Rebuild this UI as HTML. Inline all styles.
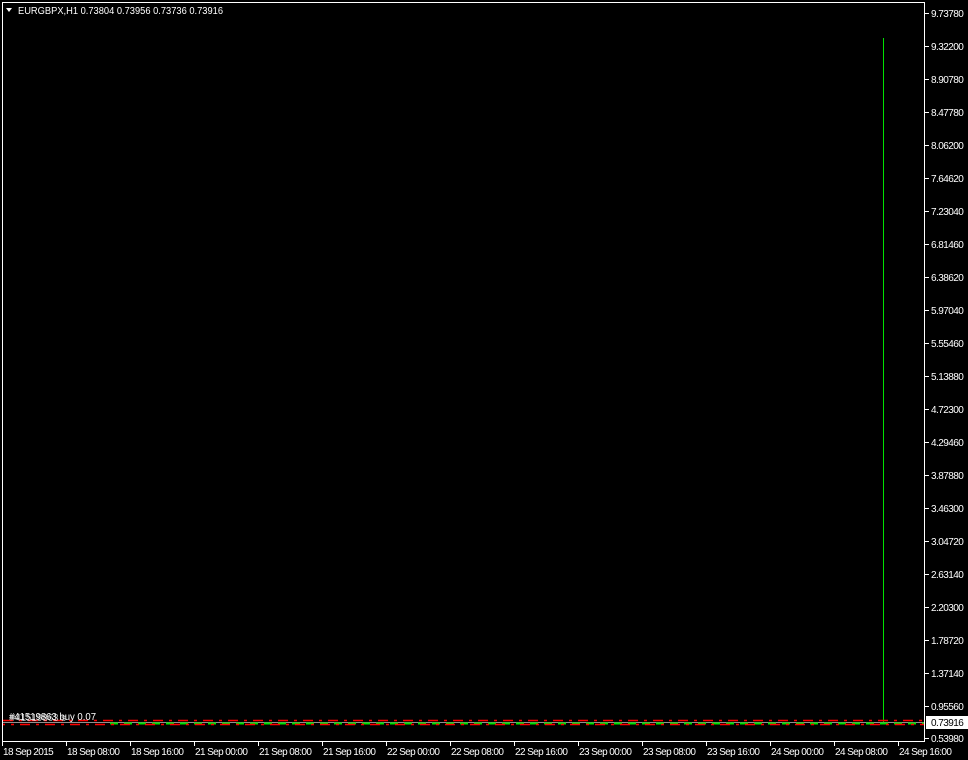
<!DOCTYPE html>
<html><head><meta charset="utf-8"><style>
html,body{margin:0;padding:0;background:#000;width:968px;height:760px;overflow:hidden}
svg text{font-family:"Liberation Sans",sans-serif;font-size:10px;fill:#fff}
.p text{letter-spacing:-0.55px}
.t text{letter-spacing:-0.6px}
</style></head><body>
<svg width="968" height="760" xmlns="http://www.w3.org/2000/svg">
<rect width="968" height="760" fill="#000"/>
<rect x="2.5" y="2.5" width="922" height="739" fill="none" stroke="#fff" stroke-width="1"/>
<polygon points="6,8 12,8 9,12" fill="#fff"/>
<text x="18" y="14" textLength="205" lengthAdjust="spacingAndGlyphs">EURGBPX,H1  0.73804 0.73956 0.73736 0.73916</text>
<line x1="883.5" y1="38" x2="883.5" y2="723" stroke="#00e000" stroke-width="1"/>
<line x1="3" y1="722.5" x2="924" y2="722.5" stroke="#909090" stroke-width="1"/>
<line x1="110" y1="723.5" x2="924" y2="723.5" stroke="#00e000" stroke-width="2" stroke-dasharray="8,6"/>
<line x1="3" y1="720.5" x2="924" y2="720.5" stroke="#ff0000" stroke-width="1.5" stroke-dasharray="10,6,3,6"/>
<line x1="3" y1="724.5" x2="924" y2="724.5" stroke="#ff0000" stroke-width="1.5" stroke-dasharray="10,6,3,6" stroke-dashoffset="8"/>
<text x="9" y="720" textLength="87" lengthAdjust="spacingAndGlyphs">#41519863 buy 0.07</text>
<text x="10" y="721" fill-opacity="0.7" textLength="56" lengthAdjust="spacingAndGlyphs">#41519863 s</text>
<g stroke="#fff">
<line x1="925" y1="13.5" x2="929" y2="13.5"/><line x1="925" y1="46.5" x2="929" y2="46.5"/><line x1="925" y1="79.5" x2="929" y2="79.5"/><line x1="925" y1="112.5" x2="929" y2="112.5"/><line x1="925" y1="145.5" x2="929" y2="145.5"/><line x1="925" y1="178.5" x2="929" y2="178.5"/><line x1="925" y1="211.5" x2="929" y2="211.5"/><line x1="925" y1="244.5" x2="929" y2="244.5"/><line x1="925" y1="277.5" x2="929" y2="277.5"/><line x1="925" y1="310.5" x2="929" y2="310.5"/><line x1="925" y1="343.5" x2="929" y2="343.5"/><line x1="925" y1="376.5" x2="929" y2="376.5"/><line x1="925" y1="409.5" x2="929" y2="409.5"/><line x1="925" y1="442.5" x2="929" y2="442.5"/><line x1="925" y1="475.5" x2="929" y2="475.5"/><line x1="925" y1="508.5" x2="929" y2="508.5"/><line x1="925" y1="541.5" x2="929" y2="541.5"/><line x1="925" y1="574.5" x2="929" y2="574.5"/><line x1="925" y1="607.5" x2="929" y2="607.5"/><line x1="925" y1="640.5" x2="929" y2="640.5"/><line x1="925" y1="673.5" x2="929" y2="673.5"/><line x1="925" y1="706.5" x2="929" y2="706.5"/><line x1="925" y1="738.5" x2="929" y2="738.5"/>
</g>
<g class="p">
<text x="931" y="17">9.73780</text><text x="931" y="50">9.32200</text><text x="931" y="83">8.90780</text><text x="931" y="116">8.47780</text><text x="931" y="149">8.06200</text><text x="931" y="182">7.64620</text><text x="931" y="215">7.23040</text><text x="931" y="248">6.81460</text><text x="931" y="281">6.38620</text><text x="931" y="314">5.97040</text><text x="931" y="347">5.55460</text><text x="931" y="380">5.13880</text><text x="931" y="413">4.72300</text><text x="931" y="446">4.29460</text><text x="931" y="479">3.87880</text><text x="931" y="512">3.46300</text><text x="931" y="545">3.04720</text><text x="931" y="578">2.63140</text><text x="931" y="611">2.20300</text><text x="931" y="644">1.78720</text><text x="931" y="677">1.37140</text><text x="931" y="710">0.95560</text><text x="931" y="742">0.53980</text>
<rect x="926" y="716" width="42" height="13" fill="#fff"/>
<text x="931" y="726" style="fill:#000">0.73916</text>
</g>
<g stroke="#fff">
<line x1="2.5" y1="741" x2="2.5" y2="746"/><line x1="66.5" y1="741" x2="66.5" y2="746"/><line x1="130.5" y1="741" x2="130.5" y2="746"/><line x1="194.5" y1="741" x2="194.5" y2="746"/><line x1="258.5" y1="741" x2="258.5" y2="746"/><line x1="322.5" y1="741" x2="322.5" y2="746"/><line x1="386.5" y1="741" x2="386.5" y2="746"/><line x1="450.5" y1="741" x2="450.5" y2="746"/><line x1="514.5" y1="741" x2="514.5" y2="746"/><line x1="578.5" y1="741" x2="578.5" y2="746"/><line x1="642.5" y1="741" x2="642.5" y2="746"/><line x1="706.5" y1="741" x2="706.5" y2="746"/><line x1="770.5" y1="741" x2="770.5" y2="746"/><line x1="834.5" y1="741" x2="834.5" y2="746"/><line x1="898.5" y1="741" x2="898.5" y2="746"/>
</g>
<g class="t">
<text x="3" y="755">18 Sep 2015</text><text x="67" y="755">18 Sep 08:00</text><text x="131" y="755">18 Sep 16:00</text><text x="195" y="755">21 Sep 00:00</text><text x="259" y="755">21 Sep 08:00</text><text x="323" y="755">21 Sep 16:00</text><text x="387" y="755">22 Sep 00:00</text><text x="451" y="755">22 Sep 08:00</text><text x="515" y="755">22 Sep 16:00</text><text x="579" y="755">23 Sep 00:00</text><text x="643" y="755">23 Sep 08:00</text><text x="707" y="755">23 Sep 16:00</text><text x="771" y="755">24 Sep 00:00</text><text x="835" y="755">24 Sep 08:00</text><text x="899" y="755">24 Sep 16:00</text>
</g>
</svg>
</body></html>
